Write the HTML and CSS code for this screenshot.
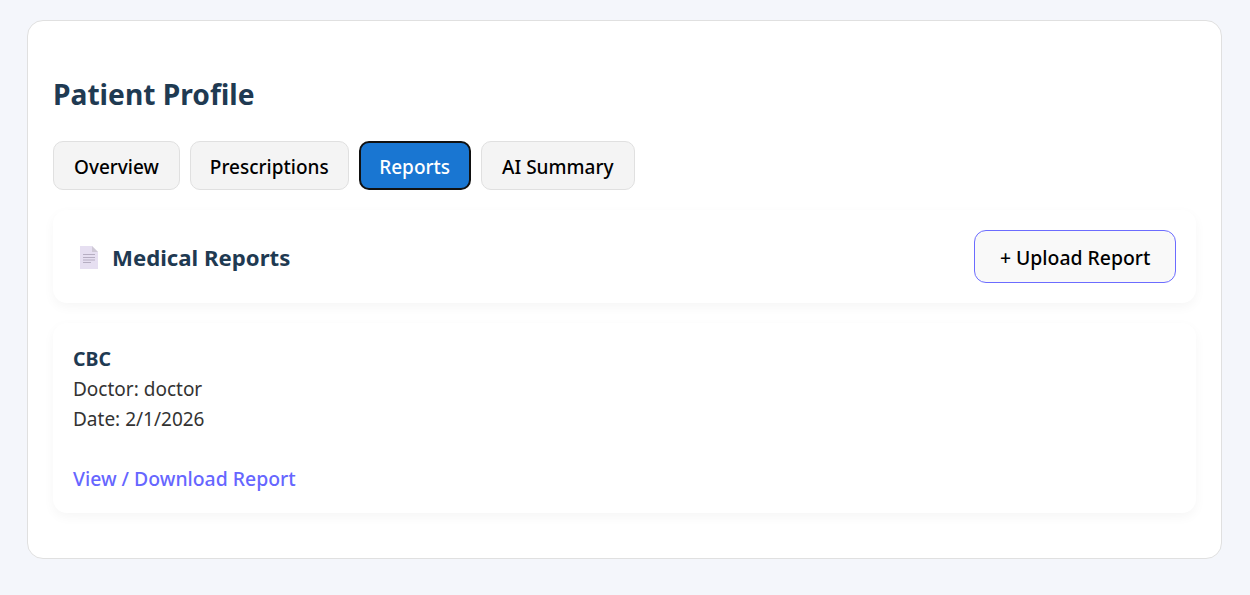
FILE: index.html
```html
<!DOCTYPE html>
<html lang="en">
<head>
    <meta charset="UTF-8">
    <meta name="viewport" content="width=device-width, initial-scale=1.0">
    <title>Patient Profile</title>
    <link rel="stylesheet" href="styles.css">
</head>
<body>
    <div class="profile-card">
        <h2 class="profile-title">Patient Profile</h2>

        <!-- tabs -->
        <div class="tabs">
            <button class="tab">Overview</button>
            <button class="tab tab-tight">Prescriptions</button>
            <button class="tab tab-active">Reports</button>
            <button class="tab tab-wide">AI Summary</button>
        </div>

        <!-- section header -->
        <div class="panel section-header">
            <h3 class="section-title">
                <svg class="doc-icon" width="18" height="23" viewBox="0 0 18 23" aria-hidden="true">
                    <path d="M0 0h12l6 6v17H0z" fill="#e6dff1"/>
                    <path d="M12 0l6 6h-6z" fill="#cfc9d6"/>
                    <path d="M3 8.5h12M3 11.5h12M3 14h12M3 16.5h8" stroke="#b6aec2" stroke-width="1" fill="none"/>
                </svg>
                Medical Reports
            </h3>
            <button class="upload-btn">+ Upload Report</button>
        </div>

        <!-- report item -->
        <div class="panel report-item">
            <strong class="report-name">CBC</strong><br>
            Doctor: doctor<br>
            Date: 2/1/2026<br>
            <br>
            <a class="report-link" href="#">View / Download Report</a>
        </div>
    </div>
</body>
</html>
```

FILE: styles.css
```css
/* page */
body {
    font-family: "Noto Sans", "Open Sans", sans-serif;
    background: #f4f6fb;
    margin: 0;
    padding: 20px 28px 36px 27px;
    color: #333;
}

/* outer card */
.profile-card {
    background: #fff;
    border: 1px solid #e0e0e0;
    border-radius: 16px;
    padding: 25px 25px 45px;
}

.profile-title {
    font-size: 28.2px;
    font-weight: 700;
    line-height: 38px;
    color: #1f3a52;
    margin: 29px 0 28px;
}

/* tabs */
.tabs {
    display: flex;
    gap: 10px;
    margin-bottom: 20px;
}

.tab {
    font-family: inherit;
    font-size: 19px;
    font-weight: 500;
    line-height: 25px;
    padding: 13px 20px 9px;
    background: #f4f4f4;
    color: #000;
    border: 1px solid #e0e0e0;
    border-radius: 10px;
}

.tab-tight {
    padding-left: 19px;
    padding-right: 19px;
}

.tab-wide {
    padding-left: 20.5px;
    padding-right: 20.5px;
}

.tab-active {
    background: #1976d2;
    color: #fff;
    border: 2px solid #111;
    padding: 12px 18.5px 8px;
}

/* white cards inside */
.panel {
    background: #fff;
    border-radius: 14px;
    padding: 20px;
    box-shadow: 0 4px 12px rgba(0, 0, 0, 0.04);
}

.section-header {
    display: flex;
    justify-content: space-between;
    align-items: center;
    margin-bottom: 20px;
}

.section-title {
    display: flex;
    align-items: center;
    font-size: 22.2px;
    font-weight: 700;
    color: #1f3a52;
    margin: 0;
    padding-top: 2px;
}

.doc-icon {
    margin: 0 14px 0 7px;
}

.upload-btn {
    font-family: inherit;
    font-size: 19.4px;
    font-weight: 500;
    line-height: 25px;
    padding: 14px 24.5px 12px;
    background: #f9f9f9;
    color: #000;
    border: 1px solid #6c6cff;
    border-radius: 12px;
}

.report-item {
    font-size: 19px;
    line-height: 30px;
    padding: 21px 20px 19px;
}

.report-name {
    font-size: 19.5px;
    color: #1f3a52;
}

.report-link {
    font-size: 19.4px;
    color: #6666ff;
    font-weight: 500;
    text-decoration: none;
}
```
